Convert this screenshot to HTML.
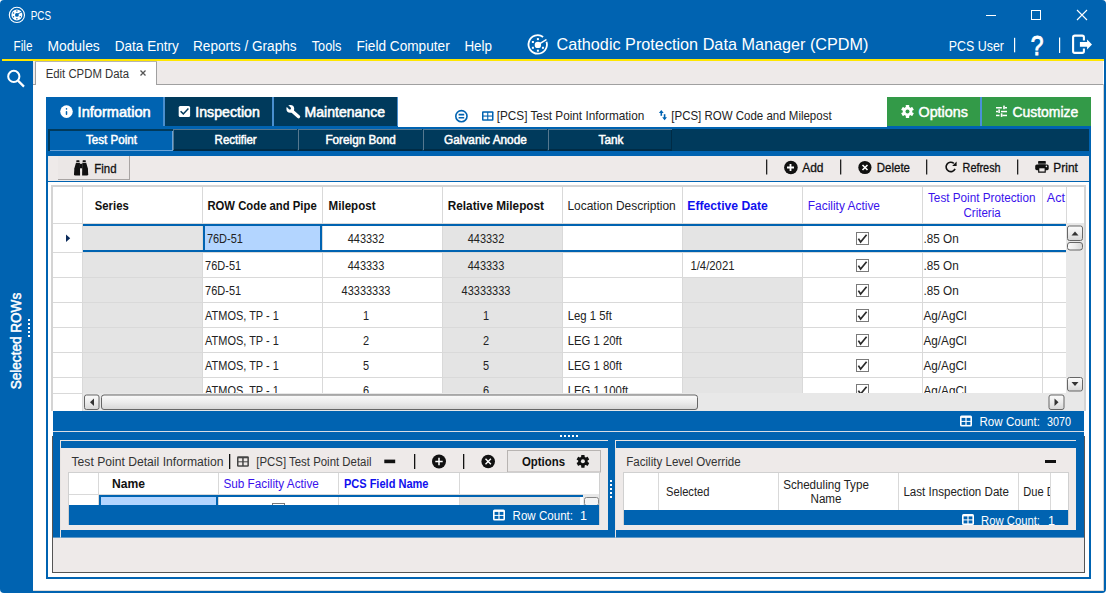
<!DOCTYPE html>
<html><head><meta charset="utf-8"><title>PCS</title>
<style>html,body{margin:0;padding:0;background:#fff;overflow:hidden}svg text{font-family:"Liberation Sans",sans-serif}</style></head>
<body><svg width="1106" height="593" viewBox="0 0 1106 593" font-family="Liberation Sans, sans-serif" style="display:block">
<defs><linearGradient id="sb" x1="0" y1="0" x2="0" y2="1"><stop offset="0" stop-color="#fbfbfb"/><stop offset="0.5" stop-color="#ececec"/><stop offset="1" stop-color="#d6d6d6"/></linearGradient><linearGradient id="sbh" x1="0" y1="0" x2="1" y2="0"><stop offset="0" stop-color="#fbfbfb"/><stop offset="0.5" stop-color="#ececec"/><stop offset="1" stop-color="#d6d6d6"/></linearGradient></defs>
<rect x="0" y="0" width="1106" height="593" fill="#ffffff" />
<rect x="0" y="0" width="1106" height="59" fill="#0063b1" />
<rect x="0" y="59" width="33" height="534" fill="#0063b1" />
<rect x="2" y="59" width="1102" height="2" fill="#ffe600" />
<rect x="1104" y="59" width="2" height="534" fill="#0063b1" />
<rect x="33" y="591" width="1073" height="2" fill="#0063b1" />
<rect x="1103" y="84" width="1" height="507" fill="#d0d0d0" />
<rect x="33" y="590" width="1070" height="1" fill="#e0dcd8" />
<path d="M0,0 L4,0 Q0,0 0,4 Z" fill="#fff"/><path d="M1106,0 L1102,0 Q1106,0 1106,4 Z" fill="#fff"/><path d="M0,593 L4,593 Q0,593 0,589 Z" fill="#fff"/><path d="M1106,593 L1102,593 Q1106,593 1106,589 Z" fill="#fff"/>
<g transform="translate(16.9,14.9)"><circle r="7.6" fill="none" stroke="#fff" stroke-width="1.1"/><circle r="5.5" fill="#fff"/><circle r="1.9" fill="#0063b1"/><circle cx="0.00" cy="3.90" r="0.75" fill="#0063b1"/><circle cx="-3.38" cy="1.95" r="0.75" fill="#0063b1"/><circle cx="-3.38" cy="-1.95" r="0.75" fill="#0063b1"/><circle cx="-0.00" cy="-3.90" r="0.75" fill="#0063b1"/><circle cx="3.38" cy="1.95" r="0.75" fill="#0063b1"/><path d="M1,-1 L6,-3.5" stroke="#0063b1" stroke-width="0.9"/></g>
<text x="30.7" y="20.3" font-size="13.5" fill="#ffffff" textLength="20.3" lengthAdjust="spacingAndGlyphs" text-anchor="start" >PCS</text>
<rect x="986" y="15" width="10" height="1" fill="#fff" />
<rect x="1031.5" y="10.5" width="9" height="9" fill="none" stroke="#fff" stroke-width="1"/>
<path d="M1077,10 L1087,20 M1087,10 L1077,20" stroke="#fff" stroke-width="1.1"/>
<text x="13.6" y="50.7" font-size="14" fill="#ffffff" textLength="18.9" lengthAdjust="spacingAndGlyphs" text-anchor="start" >File</text>
<text x="47.4" y="50.7" font-size="14" fill="#ffffff" textLength="52.4" lengthAdjust="spacingAndGlyphs" text-anchor="start" >Modules</text>
<text x="114.8" y="50.7" font-size="14" fill="#ffffff" textLength="63.9" lengthAdjust="spacingAndGlyphs" text-anchor="start" >Data Entry</text>
<text x="193" y="50.7" font-size="14" fill="#ffffff" textLength="103.6" lengthAdjust="spacingAndGlyphs" text-anchor="start" >Reports / Graphs</text>
<text x="311.7" y="50.7" font-size="14" fill="#ffffff" textLength="29.8" lengthAdjust="spacingAndGlyphs" text-anchor="start" >Tools</text>
<text x="356.5" y="50.7" font-size="14" fill="#ffffff" textLength="93.2" lengthAdjust="spacingAndGlyphs" text-anchor="start" >Field Computer</text>
<text x="464.4" y="50.7" font-size="14" fill="#ffffff" textLength="27.6" lengthAdjust="spacingAndGlyphs" text-anchor="start" >Help</text>
<g transform="translate(537.9,44.9)"><path d="M5.2,-7.9 A9.2,9.2 0 1 0 8.6,-3.2" fill="none" stroke="#fff" stroke-width="1.8"/><circle r="3.2" fill="#fff"/><rect x="-1.00" y="-6.80" width="2" height="2" fill="#fff"/><rect x="-6.02" y="-3.90" width="2" height="2" fill="#fff"/><rect x="-6.02" y="1.90" width="2" height="2" fill="#fff"/><rect x="-1.00" y="4.80" width="2" height="2" fill="#fff"/><rect x="4.02" y="1.90" width="2" height="2" fill="#fff"/><path d="M1.5,-1 L8,-5" stroke="#fff" stroke-width="1.6" stroke-linecap="round"/></g>
<text x="556.6" y="50.4" font-size="16.2" fill="#ffffff" textLength="311.9" lengthAdjust="spacingAndGlyphs" text-anchor="start" >Cathodic Protection Data Manager (CPDM)</text>
<text x="948.8" y="51.2" font-size="14" fill="#ffffff" textLength="55.2" lengthAdjust="spacingAndGlyphs" text-anchor="start" >PCS User</text>
<rect x="1014" y="37.8" width="1.2000000000000455" height="14.5" fill="#ffffff" />
<rect x="1059" y="37.5" width="1.2000000000000455" height="15.5" fill="#ffffff" />
<text x="1030.8" y="54.7" font-size="27.5" fill="#ffffff" textLength="12.7" lengthAdjust="spacingAndGlyphs" text-anchor="start" stroke="#fff" stroke-width="0.9">?</text>
<path d="M1083.9,40.6 L1083.9,37.3 Q1083.9,35.6 1082.2,35.6 L1074.8,35.6 Q1073.1,35.6 1073.1,37.3 L1073.1,51.2 Q1073.1,52.9 1074.8,52.9 L1082.2,52.9 Q1083.9,52.9 1083.9,51.2 L1083.9,48.5" fill="none" stroke="#fff" stroke-width="2.1"/>
<path d="M1079.9,42.1 L1087.1,42.1 L1087.1,39.4 L1092,44.4 L1087.1,49.5 L1087.1,46.7 L1079.9,46.7 Z" fill="#fff"/>
<g fill="none" stroke="#fff" stroke-width="2"><circle cx="13.8" cy="76.4" r="5.6"/><path d="M18,80.6 L24,86.6" stroke-width="2.2"/></g>
<text x="0" y="0" font-size="14" fill="#ffffff" textLength="96.5" lengthAdjust="spacingAndGlyphs" text-anchor="start" transform="translate(21.3,389.3) rotate(-90)" stroke="#fff" stroke-width="0.5">Selected ROWs</text>
<rect x="28" y="319" width="2" height="2" fill="#ffffff" />
<rect x="28" y="323" width="2" height="2" fill="#ffffff" />
<rect x="28" y="327" width="2" height="2" fill="#ffffff" />
<rect x="28" y="331" width="2" height="2" fill="#ffffff" />
<rect x="28" y="335" width="2" height="2" fill="#ffffff" />
<rect x="33" y="61" width="1070" height="23" fill="#eeeae9" />
<rect x="33" y="84" width="1070" height="1" fill="#a0a0a0" />
<rect x="35" y="61" width="1" height="24" fill="#a0a0a0" />
<rect x="36" y="61" width="120" height="25" fill="#ffffff" />
<rect x="156" y="61" width="1" height="24" fill="#a0a0a0" />
<rect x="35" y="61" width="122" height="1" fill="#b4b4b4" />
<text x="45.7" y="78" font-size="12.5" fill="#333333" textLength="83.3" lengthAdjust="spacingAndGlyphs" text-anchor="start" >Edit CPDM Data</text>
<path d="M140.5,70.5 L145.5,75.5 M145.5,70.5 L140.5,75.5" stroke="#555" stroke-width="1.3"/>
<rect x="46" y="97" width="117" height="29" fill="#0063b1" />
<rect x="163" y="97" width="2" height="29" fill="#4a8fcf" />
<rect x="165" y="97" width="107" height="29" fill="#003a5c" />
<rect x="272" y="97" width="2" height="29" fill="#4a8fcf" />
<rect x="274" y="97" width="123" height="29" fill="#003a5c" />
<rect x="887" y="97" width="93" height="29" fill="#339a48" />
<rect x="980" y="97" width="2" height="29" fill="#4a90d9" />
<rect x="982" y="97" width="109" height="29" fill="#339a48" />
<rect x="46" y="126" width="352" height="3" fill="#0063b1" />
<rect x="398" y="127" width="489" height="2" fill="#0063b1" />
<rect x="887" y="126" width="204" height="3" fill="#0063b1" />
<rect x="397" y="97" width="1" height="29" fill="#4a8fcf" />
<rect x="46" y="129" width="2" height="450" fill="#0063b1" />
<rect x="1089" y="129" width="2" height="450" fill="#0063b1" />
<rect x="46" y="577" width="1045" height="2" fill="#0063b1" />
<circle cx="66.5" cy="111.6" r="6.3" fill="#fff"/>
<rect x="65.75" y="111" width="1.5" height="3.9" rx="0.7" fill="#0063b1"/><rect x="65.75" y="108" width="1.5" height="1.8" rx="0.7" fill="#0063b1"/>
<text x="77.6" y="116.9" font-size="13.8" fill="#ffffff" textLength="73.1" lengthAdjust="spacingAndGlyphs" text-anchor="start" stroke="#fff" stroke-width="0.55">Information</text>
<rect x="178.7" y="105.9" width="11.4" height="11.2" rx="1.5" fill="#fff"/><path d="M180.6,111.3 L183.3,113.9 L188.4,108.6" fill="none" stroke="#003a5c" stroke-width="1.5"/>
<text x="195.3" y="116.9" font-size="13.8" fill="#ffffff" textLength="64.5" lengthAdjust="spacingAndGlyphs" text-anchor="start" stroke="#fff" stroke-width="0.55">Inspection</text>
<path d="M291.5,110.5 L298.6,116.8" stroke="#fff" stroke-width="3.2" stroke-linecap="round"/><circle cx="290.3" cy="108.8" r="3.9" fill="#fff"/><path d="M289.8,108.3 L286,104.5" stroke="#003a5c" stroke-width="2.4" stroke-linecap="round"/>
<text x="304.6" y="116.9" font-size="13.8" fill="#ffffff" textLength="80.4" lengthAdjust="spacingAndGlyphs" text-anchor="start" stroke="#fff" stroke-width="0.55">Maintenance</text>
<g fill="none" stroke="#0063b1" stroke-width="1.6"><circle cx="461.4" cy="116.2" r="5.6"/><path d="M458.6,114.6 L464.2,114.6 M458.6,117.8 L464.2,117.8"/></g>
<g><rect x="482" y="111.3" width="11.5" height="9.5" rx="1" fill="#0063b1"/><rect x="483.5" y="112.8" width="3.7" height="2.7" fill="#fff"/><rect x="488.3" y="112.8" width="3.7" height="2.7" fill="#fff"/><rect x="483.5" y="116.6" width="3.7" height="2.7" fill="#fff"/><rect x="488.3" y="116.6" width="3.7" height="2.7" fill="#fff"/></g>
<text x="496.7" y="120" font-size="11.9" fill="#222222" textLength="147.6" lengthAdjust="spacingAndGlyphs" text-anchor="start" >[PCS] Test Point Information</text>
<g fill="#0063b1"><rect x="660.5" y="111.5" width="1.6" height="4.3"/><path d="M658.9,113 L661.3,109.9 L663.7,113 Z"/><rect x="663.8" y="114.2" width="1.6" height="4.3"/><path d="M662.2,117.2 L664.6,120.2 L667,117.2 Z"/></g>
<text x="671.3" y="120" font-size="11.9" fill="#222222" textLength="160.3" lengthAdjust="spacingAndGlyphs" text-anchor="start" >[PCS] ROW Code and Milepost</text>
<g transform="translate(907.5,111.5) scale(1.0)"><circle r="4.7" fill="#ffffff"/><rect x="-1.7" y="-6.4" width="3.4" height="3.5" rx="0.4" fill="#ffffff" transform="rotate(0)"/><rect x="-1.7" y="-6.4" width="3.4" height="3.5" rx="0.4" fill="#ffffff" transform="rotate(60)"/><rect x="-1.7" y="-6.4" width="3.4" height="3.5" rx="0.4" fill="#ffffff" transform="rotate(120)"/><rect x="-1.7" y="-6.4" width="3.4" height="3.5" rx="0.4" fill="#ffffff" transform="rotate(180)"/><rect x="-1.7" y="-6.4" width="3.4" height="3.5" rx="0.4" fill="#ffffff" transform="rotate(240)"/><rect x="-1.7" y="-6.4" width="3.4" height="3.5" rx="0.4" fill="#ffffff" transform="rotate(300)"/><circle r="2" fill="#339a48"/></g>
<text x="918.5" y="116.8" font-size="13.8" fill="#ffffff" textLength="49.4" lengthAdjust="spacingAndGlyphs" text-anchor="start" stroke="#fff" stroke-width="0.45">Options</text>
<g fill="#fff"><rect x="996" y="107" width="5.8" height="1.5"/><rect x="1003.2" y="105.6" width="1.6" height="3.6"/><rect x="1004.8" y="107" width="2.2" height="1.5"/><rect x="996" y="110.8" width="2" height="1.5"/><rect x="998.3" y="109.4" width="1.6" height="3.6"/><rect x="1001" y="110.8" width="6" height="1.5"/><rect x="996" y="114.7" width="3.5" height="1.5"/><rect x="1000.8" y="113.3" width="1.6" height="3.6"/><rect x="1002.4" y="114.7" width="4.6" height="1.5"/></g>
<text x="1012.4" y="116.8" font-size="13.8" fill="#ffffff" textLength="65.8" lengthAdjust="spacingAndGlyphs" text-anchor="start" stroke="#fff" stroke-width="0.45">Customize</text>
<rect x="48" y="129" width="1041" height="22" fill="#003a5c" />
<rect x="48" y="151" width="1041" height="5" fill="#0063b1" />
<rect x="50" y="131" width="122" height="19" fill="#0063b1" />
<rect x="50" y="150" width="122" height="1" fill="#6aa3d6" />
<rect x="172" y="131" width="1" height="20" fill="#6aa3d6" />
<rect x="173" y="129" width="124" height="1" fill="#56788f" />
<rect x="173" y="129" width="1" height="21" fill="#56788f" />
<rect x="174" y="149" width="123" height="2" fill="#002b45" />
<rect x="298" y="129" width="124" height="1" fill="#56788f" />
<rect x="298" y="129" width="1" height="21" fill="#56788f" />
<rect x="299" y="149" width="123" height="2" fill="#002b45" />
<rect x="423" y="129" width="124" height="1" fill="#56788f" />
<rect x="423" y="129" width="1" height="21" fill="#56788f" />
<rect x="424" y="149" width="123" height="2" fill="#002b45" />
<rect x="548" y="129" width="124" height="1" fill="#56788f" />
<rect x="548" y="129" width="1" height="21" fill="#56788f" />
<rect x="549" y="149" width="123" height="2" fill="#002b45" />
<rect x="671" y="130" width="1" height="21" fill="#002b45" />
<text x="86" y="144" font-size="12.3" fill="#ffffff" textLength="51.0" lengthAdjust="spacingAndGlyphs" text-anchor="start" stroke="#fff" stroke-width="0.5">Test Point</text>
<text x="214.6" y="144" font-size="12.3" fill="#ffffff" textLength="42.1" lengthAdjust="spacingAndGlyphs" text-anchor="start" stroke="#fff" stroke-width="0.5">Rectifier</text>
<text x="325.4" y="144" font-size="12.3" fill="#ffffff" textLength="70.5" lengthAdjust="spacingAndGlyphs" text-anchor="start" stroke="#fff" stroke-width="0.5">Foreign Bond</text>
<text x="444.1" y="144" font-size="12.3" fill="#ffffff" textLength="82.7" lengthAdjust="spacingAndGlyphs" text-anchor="start" stroke="#fff" stroke-width="0.5">Galvanic Anode</text>
<text x="598.6" y="144" font-size="12.3" fill="#ffffff" textLength="24.9" lengthAdjust="spacingAndGlyphs" text-anchor="start" stroke="#fff" stroke-width="0.5">Tank</text>
<rect x="48" y="156" width="1041" height="25" fill="#eeeae9" />
<rect x="48" y="181" width="1041" height="1" fill="#0063b1" />
<rect x="58" y="156" width="72" height="24" fill="#ebe7e6" />
<rect x="58" y="179" width="72" height="1" fill="#a8a4a3" />
<rect x="129" y="156" width="1" height="24" fill="#a8a4a3" />
<g fill="#111"><rect x="76.3" y="160.2" width="3.2" height="1.9" rx="0.5"/><rect x="82.6" y="160.2" width="3.2" height="1.9" rx="0.5"/><path d="M76,162.8 L79.9,162.8 L80.1,175.6 L75.3,175.6 Q74,175.6 74,174.2 L74.3,168.5 Z"/><path d="M82.3,162.8 L86.2,162.8 L87.9,168.5 L88.2,174.2 Q88.2,175.6 86.9,175.6 L82.1,175.6 Z"/><rect x="79.8" y="163.8" width="2.6" height="4.5"/></g>
<text x="94.3" y="172.6" font-size="13" fill="#111111" textLength="22.2" lengthAdjust="spacingAndGlyphs" text-anchor="start" stroke="#111" stroke-width="0.3">Find</text>
<rect x="766" y="159.5" width="1.2999999999999545" height="15.0" fill="#222" />
<rect x="840" y="159.5" width="1.2999999999999545" height="15.0" fill="#222" />
<rect x="926" y="159.5" width="1.2999999999999545" height="15.0" fill="#222" />
<rect x="1017" y="159.5" width="1.2999999999999545" height="15.0" fill="#222" />
<circle cx="790.9" cy="167.5" r="6.8" fill="#111"/><path d="M787,167.5 L794,167.5 M790.5,164 L790.5,171" stroke="#fff" stroke-width="1.8"/>
<text x="802.2" y="172" font-size="13" fill="#111111" textLength="21.3" lengthAdjust="spacingAndGlyphs" text-anchor="start" stroke="#111" stroke-width="0.3">Add</text>
<circle cx="864.9" cy="167.5" r="6.6" fill="#111"/><path d="M862.5,165 L867.5,170 M867.5,165 L862.5,170" stroke="#fff" stroke-width="1.6"/>
<text x="876.8" y="172" font-size="13" fill="#111111" textLength="33.2" lengthAdjust="spacingAndGlyphs" text-anchor="start" stroke="#111" stroke-width="0.3">Delete</text>
<path d="M953.8,163.3 A4.7,4.7 0 1 0 955.1,168.9" fill="none" stroke="#111" stroke-width="1.6"/><path d="M956.6,161.6 L956.6,166 L952.2,166 Z" fill="#111"/>
<text x="962.6" y="172" font-size="13" fill="#111111" textLength="38.0" lengthAdjust="spacingAndGlyphs" text-anchor="start" stroke="#111" stroke-width="0.3">Refresh</text>
<g fill="#111"><rect x="1038.1" y="161" width="7.7" height="2.8" rx="0.4"/><rect x="1038.4" y="163.8" width="7.1" height="1" fill="#555"/><rect x="1035.2" y="164.4" width="13.5" height="5.8" rx="1.6"/><rect x="1038.1" y="167.2" width="7.7" height="5.6" rx="0.4"/></g><rect x="1039.3" y="168.3" width="5.3" height="3.2" fill="#eeeae9"/><circle cx="1046.4" cy="166.4" r="0.8" fill="#eee"/>
<text x="1053.3" y="172" font-size="13" fill="#111111" textLength="24.6" lengthAdjust="spacingAndGlyphs" text-anchor="start" stroke="#111" stroke-width="0.3">Print</text>
<rect x="51" y="185" width="1035" height="226" fill="#d4d4d4" />
<rect x="53" y="187" width="1031" height="224" fill="#ffffff" />
<rect x="53" y="223" width="1013" height="1" fill="#d9d9d9" />
<rect x="83" y="224" width="119" height="28" fill="#e4e4e4" />
<rect x="443" y="224" width="119" height="28" fill="#e4e4e4" />
<rect x="683" y="224" width="119" height="28" fill="#e4e4e4" />
<rect x="83" y="252" width="119" height="25" fill="#e4e4e4" />
<rect x="443" y="252" width="119" height="25" fill="#e4e4e4" />
<rect x="83" y="277" width="119" height="25" fill="#e4e4e4" />
<rect x="443" y="277" width="119" height="25" fill="#e4e4e4" />
<rect x="683" y="277" width="119" height="25" fill="#e4e4e4" />
<rect x="83" y="302" width="119" height="25" fill="#e4e4e4" />
<rect x="443" y="302" width="119" height="25" fill="#e4e4e4" />
<rect x="683" y="302" width="119" height="25" fill="#e4e4e4" />
<rect x="83" y="327" width="119" height="25" fill="#e4e4e4" />
<rect x="443" y="327" width="119" height="25" fill="#e4e4e4" />
<rect x="683" y="327" width="119" height="25" fill="#e4e4e4" />
<rect x="83" y="352" width="119" height="25" fill="#e4e4e4" />
<rect x="443" y="352" width="119" height="25" fill="#e4e4e4" />
<rect x="683" y="352" width="119" height="25" fill="#e4e4e4" />
<rect x="83" y="377" width="119" height="25" fill="#e4e4e4" />
<rect x="443" y="377" width="119" height="25" fill="#e4e4e4" />
<rect x="683" y="377" width="119" height="25" fill="#e4e4e4" />
<rect x="53" y="252" width="1013" height="1" fill="#d9d9d9" />
<rect x="53" y="277" width="1013" height="1" fill="#d9d9d9" />
<rect x="53" y="302" width="1013" height="1" fill="#d9d9d9" />
<rect x="53" y="327" width="1013" height="1" fill="#d9d9d9" />
<rect x="53" y="352" width="1013" height="1" fill="#d9d9d9" />
<rect x="53" y="377" width="1013" height="1" fill="#d9d9d9" />
<rect x="82" y="187" width="1" height="206" fill="#d9d9d9" />
<rect x="202" y="187" width="1" height="206" fill="#d9d9d9" />
<rect x="322" y="187" width="1" height="206" fill="#d9d9d9" />
<rect x="442" y="187" width="1" height="206" fill="#d9d9d9" />
<rect x="562" y="187" width="1" height="206" fill="#d9d9d9" />
<rect x="682" y="187" width="1" height="206" fill="#d9d9d9" />
<rect x="802" y="187" width="1" height="206" fill="#d9d9d9" />
<rect x="922" y="187" width="1" height="206" fill="#d9d9d9" />
<rect x="1042" y="187" width="1" height="206" fill="#d9d9d9" />
<rect x="1066" y="187" width="1" height="206" fill="#d9d9d9" />
<rect x="203" y="226" width="119" height="24" fill="#b3d5ff" />
<rect x="83" y="224" width="983" height="2" fill="#0063b1" />
<rect x="83" y="250" width="983" height="2" fill="#0063b1" />
<rect x="203" y="224" width="2" height="28" fill="#0063b1" />
<rect x="320" y="224" width="2" height="28" fill="#0063b1" />
<path d="M66,234.5 L70.2,238.2 L66,242 Z" fill="#0a2a5a"/>
<text x="94.8" y="210" font-size="12.5" fill="#111" font-weight="bold" textLength="33.9" lengthAdjust="spacingAndGlyphs" text-anchor="start" >Series</text>
<text x="207.4" y="210" font-size="12.5" fill="#111" font-weight="bold" textLength="109.3" lengthAdjust="spacingAndGlyphs" text-anchor="start" >ROW Code and Pipe</text>
<text x="328.6" y="210" font-size="12.5" fill="#111" font-weight="bold" textLength="46.9" lengthAdjust="spacingAndGlyphs" text-anchor="start" >Milepost</text>
<text x="447.8" y="210" font-size="12.5" fill="#111" font-weight="bold" textLength="96.2" lengthAdjust="spacingAndGlyphs" text-anchor="start" >Relative Milepost</text>
<text x="567.4" y="210" font-size="12.5" fill="#222" textLength="108.3" lengthAdjust="spacingAndGlyphs" text-anchor="start" >Location Description</text>
<text x="687.3" y="210" font-size="12.5" fill="#1010ee" font-weight="bold" textLength="80.6" lengthAdjust="spacingAndGlyphs" text-anchor="start" >Effective Date</text>
<text x="807.8" y="210" font-size="12.5" fill="#3a12ec" textLength="72.2" lengthAdjust="spacingAndGlyphs" text-anchor="start" >Facility Active</text>
<text x="928" y="202" font-size="12.5" fill="#3a12ec" textLength="107.5" lengthAdjust="spacingAndGlyphs" text-anchor="start" >Test Point Protection</text>
<text x="963.5" y="217" font-size="12.5" fill="#3a12ec" textLength="37.1" lengthAdjust="spacingAndGlyphs" text-anchor="start" >Criteria</text>
<svg x="1043" y="187" width="23" height="36"><text x="3.8" y="15" font-size="12.5" fill="#3a12ec" font-family="Liberation Sans">Act</text></svg>
<svg x="53" y="224" width="1013" height="169" overflow="hidden"><g transform="translate(-53,-224)">
<text x="206.9" y="243" font-size="12.6" fill="#222222" textLength="36.0" lengthAdjust="spacingAndGlyphs" text-anchor="start" >76D-51</text>
<text x="366" y="243" font-size="12.6" fill="#222222" textLength="36.6" lengthAdjust="spacingAndGlyphs" text-anchor="middle" >443332</text>
<text x="486" y="243" font-size="12.6" fill="#222222" textLength="36.6" lengthAdjust="spacingAndGlyphs" text-anchor="middle" >443332</text>
<rect x="856.5" y="232.5" width="12" height="12" fill="#fff" stroke="#7a7a7a" stroke-width="1"/><path d="M858.4,238.6 L860.6,242 L866.6,234.8" fill="none" stroke="#2a2a2a" stroke-width="1.7"/>
<text x="923.5" y="243" font-size="12.6" fill="#222222" textLength="35.2" lengthAdjust="spacingAndGlyphs" text-anchor="start" >.85 On</text>
<text x="205.1" y="270" font-size="12.6" fill="#222222" textLength="36.0" lengthAdjust="spacingAndGlyphs" text-anchor="start" >76D-51</text>
<text x="366" y="270" font-size="12.6" fill="#222222" textLength="36.6" lengthAdjust="spacingAndGlyphs" text-anchor="middle" >443333</text>
<text x="486" y="270" font-size="12.6" fill="#222222" textLength="36.6" lengthAdjust="spacingAndGlyphs" text-anchor="middle" >443333</text>
<text x="690.4" y="270" font-size="12.6" fill="#222222" textLength="44.1" lengthAdjust="spacingAndGlyphs" text-anchor="start" >1/4/2021</text>
<rect x="856.5" y="259.5" width="12" height="12" fill="#fff" stroke="#7a7a7a" stroke-width="1"/><path d="M858.4,265.6 L860.6,269 L866.6,261.8" fill="none" stroke="#2a2a2a" stroke-width="1.7"/>
<text x="923.5" y="270" font-size="12.6" fill="#222222" textLength="35.2" lengthAdjust="spacingAndGlyphs" text-anchor="start" >.85 On</text>
<text x="205.1" y="295" font-size="12.6" fill="#222222" textLength="36.0" lengthAdjust="spacingAndGlyphs" text-anchor="start" >76D-51</text>
<text x="366" y="295" font-size="12.6" fill="#222222" textLength="48.8" lengthAdjust="spacingAndGlyphs" text-anchor="middle" >43333333</text>
<text x="486" y="295" font-size="12.6" fill="#222222" textLength="48.8" lengthAdjust="spacingAndGlyphs" text-anchor="middle" >43333333</text>
<rect x="856.5" y="284.5" width="12" height="12" fill="#fff" stroke="#7a7a7a" stroke-width="1"/><path d="M858.4,290.6 L860.6,294 L866.6,286.8" fill="none" stroke="#2a2a2a" stroke-width="1.7"/>
<text x="923.5" y="295" font-size="12.6" fill="#222222" textLength="35.2" lengthAdjust="spacingAndGlyphs" text-anchor="start" >.85 On</text>
<text x="205.1" y="320" font-size="12.6" fill="#222222" textLength="73.7" lengthAdjust="spacingAndGlyphs" text-anchor="start" >ATMOS, TP - 1</text>
<text x="366" y="320" font-size="12.6" fill="#222222" textLength="6.1" lengthAdjust="spacingAndGlyphs" text-anchor="middle" >1</text>
<text x="486" y="320" font-size="12.6" fill="#222222" textLength="6.1" lengthAdjust="spacingAndGlyphs" text-anchor="middle" >1</text>
<text x="567.7" y="320" font-size="12.6" fill="#222222" textLength="44.1" lengthAdjust="spacingAndGlyphs" text-anchor="start" >Leg 1 5ft</text>
<rect x="856.5" y="309.5" width="12" height="12" fill="#fff" stroke="#7a7a7a" stroke-width="1"/><path d="M858.4,315.6 L860.6,319 L866.6,311.8" fill="none" stroke="#2a2a2a" stroke-width="1.7"/>
<text x="923.5" y="320" font-size="12.6" fill="#222222" textLength="43.0" lengthAdjust="spacingAndGlyphs" text-anchor="start" >Ag/AgCl</text>
<text x="205.1" y="345" font-size="12.6" fill="#222222" textLength="73.7" lengthAdjust="spacingAndGlyphs" text-anchor="start" >ATMOS, TP - 1</text>
<text x="366" y="345" font-size="12.6" fill="#222222" textLength="6.1" lengthAdjust="spacingAndGlyphs" text-anchor="middle" >2</text>
<text x="486" y="345" font-size="12.6" fill="#222222" textLength="6.1" lengthAdjust="spacingAndGlyphs" text-anchor="middle" >2</text>
<text x="567.7" y="345" font-size="12.6" fill="#222222" textLength="54.2" lengthAdjust="spacingAndGlyphs" text-anchor="start" >LEG 1 20ft</text>
<rect x="856.5" y="334.5" width="12" height="12" fill="#fff" stroke="#7a7a7a" stroke-width="1"/><path d="M858.4,340.6 L860.6,344 L866.6,336.8" fill="none" stroke="#2a2a2a" stroke-width="1.7"/>
<text x="923.5" y="345" font-size="12.6" fill="#222222" textLength="43.0" lengthAdjust="spacingAndGlyphs" text-anchor="start" >Ag/AgCl</text>
<text x="205.1" y="370" font-size="12.6" fill="#222222" textLength="73.7" lengthAdjust="spacingAndGlyphs" text-anchor="start" >ATMOS, TP - 1</text>
<text x="366" y="370" font-size="12.6" fill="#222222" textLength="6.1" lengthAdjust="spacingAndGlyphs" text-anchor="middle" >5</text>
<text x="486" y="370" font-size="12.6" fill="#222222" textLength="6.1" lengthAdjust="spacingAndGlyphs" text-anchor="middle" >5</text>
<text x="567.7" y="370" font-size="12.6" fill="#222222" textLength="54.2" lengthAdjust="spacingAndGlyphs" text-anchor="start" >LEG 1 80ft</text>
<rect x="856.5" y="359.5" width="12" height="12" fill="#fff" stroke="#7a7a7a" stroke-width="1"/><path d="M858.4,365.6 L860.6,369 L866.6,361.8" fill="none" stroke="#2a2a2a" stroke-width="1.7"/>
<text x="923.5" y="370" font-size="12.6" fill="#222222" textLength="43.0" lengthAdjust="spacingAndGlyphs" text-anchor="start" >Ag/AgCl</text>
<text x="205.1" y="395" font-size="12.6" fill="#222222" textLength="73.7" lengthAdjust="spacingAndGlyphs" text-anchor="start" >ATMOS, TP - 1</text>
<text x="366" y="395" font-size="12.6" fill="#222222" textLength="6.1" lengthAdjust="spacingAndGlyphs" text-anchor="middle" >6</text>
<text x="486" y="395" font-size="12.6" fill="#222222" textLength="6.1" lengthAdjust="spacingAndGlyphs" text-anchor="middle" >6</text>
<text x="567.7" y="395" font-size="12.6" fill="#222222" textLength="60.5" lengthAdjust="spacingAndGlyphs" text-anchor="start" >LEG 1 100ft</text>
<rect x="856.5" y="384.5" width="12" height="12" fill="#fff" stroke="#7a7a7a" stroke-width="1"/><path d="M858.4,390.6 L860.6,394 L866.6,386.8" fill="none" stroke="#2a2a2a" stroke-width="1.7"/>
<text x="923.5" y="395" font-size="12.6" fill="#222222" textLength="43.0" lengthAdjust="spacingAndGlyphs" text-anchor="start" >Ag/AgCl</text>
</g></svg>
<rect x="1066" y="223" width="18" height="170" fill="#e8e8e8" />
<rect x="1067.5" y="226" width="15" height="14.5" rx="2" fill="url(#sb)" stroke="#666"/>
<path d="M1071.5,235.5 L1075,231.5 L1078.5,235.5 Z" fill="#333"/>
<rect x="1067.5" y="242.5" width="15" height="7.5" rx="2.5" fill="url(#sbh)" stroke="#666"/>
<rect x="1067.5" y="377.5" width="15" height="13.5" rx="2" fill="url(#sb)" stroke="#666"/>
<path d="M1071.5,382 L1075,386 L1078.5,382 Z" fill="#333"/>
<rect x="53" y="393" width="1031" height="18" fill="#ffffff" />
<rect x="83" y="393" width="1001" height="18" fill="#e8e8e8" />
<rect x="82" y="393" width="1" height="18" fill="#d9d9d9" />
<rect x="53" y="393" width="29" height="1" fill="#d9d9d9" />
<rect x="84.5" y="395" width="14.5" height="14.5" rx="2" fill="url(#sb)" stroke="#666"/>
<path d="M94,398.5 L90,402.2 L94,406 Z" fill="#333"/>
<rect x="101.5" y="395" width="596" height="14.5" rx="2.5" fill="url(#sb)" stroke="#666"/>
<rect x="1049" y="395" width="15" height="14.5" rx="2" fill="url(#sb)" stroke="#666"/>
<path d="M1054.5,398.5 L1058.5,402.2 L1054.5,406 Z" fill="#333"/>
<rect x="53" y="411" width="1031" height="20" fill="#0063b1" />
<g><rect x="960" y="415.5" width="12" height="11" rx="1.5" fill="#fff"/><rect x="961.6" y="417.9" width="3.8" height="3" fill="#0063b1"/><rect x="966.6" y="417.9" width="3.8" height="3" fill="#0063b1"/><rect x="961.6" y="421.9" width="3.8" height="3" fill="#0063b1"/><rect x="966.6" y="421.9" width="3.8" height="3" fill="#0063b1"/></g>
<text x="979.5" y="426" font-size="12.5" fill="#ffffff" textLength="60.5" lengthAdjust="spacingAndGlyphs" text-anchor="start" >Row Count:</text>
<text x="1047" y="426" font-size="12.5" fill="#ffffff" textLength="24.0" lengthAdjust="spacingAndGlyphs" text-anchor="start" >3070</text>
<rect x="52" y="436" width="1033" height="137" fill="#555555" />
<rect x="53" y="431" width="1031" height="141" fill="#0063b1" />
<rect x="53" y="431" width="1031" height="1" fill="#d8dde4" />
<rect x="560" y="435" width="2" height="2" fill="#ffffff" />
<rect x="564" y="435" width="2" height="2" fill="#ffffff" />
<rect x="568" y="435" width="2" height="2" fill="#ffffff" />
<rect x="572" y="435" width="2" height="2" fill="#ffffff" />
<rect x="576" y="435" width="2" height="2" fill="#ffffff" />
<rect x="53" y="537.6" width="1031" height="34.39999999999998" fill="#eeeae9" />
<rect x="60" y="440" width="548" height="1" fill="#e8e4e2" />
<rect x="60" y="440" width="1" height="97.60000000000002" fill="#e8e4e2" />
<rect x="61" y="448" width="547" height="82" fill="#eeeae9" />
<rect x="615" y="440" width="461" height="1" fill="#e8e4e2" />
<rect x="615" y="440" width="1" height="97.60000000000002" fill="#e8e4e2" />
<rect x="616" y="448" width="460" height="82" fill="#eeeae9" />
<rect x="610" y="480" width="2" height="2" fill="#ffffff" />
<rect x="610" y="484" width="2" height="2" fill="#ffffff" />
<rect x="610" y="488" width="2" height="2" fill="#ffffff" />
<rect x="610" y="492" width="2" height="2" fill="#ffffff" />
<rect x="610" y="496" width="2" height="2" fill="#ffffff" />
<text x="71.5" y="466.3" font-size="12.5" fill="#333" textLength="151.9" lengthAdjust="spacingAndGlyphs" text-anchor="start" >Test Point Detail Information</text>
<rect x="229" y="454" width="1.3000000000000114" height="15" fill="#111" />
<g><rect x="237" y="456.2" width="11.9" height="10.5" rx="1.3" fill="#444"/><rect x="238.5" y="458.3" width="3.7" height="3" fill="#eeeae9"/><rect x="243.7" y="458.3" width="3.7" height="3" fill="#eeeae9"/><rect x="238.5" y="462.3" width="3.7" height="3" fill="#eeeae9"/><rect x="243.7" y="462.3" width="3.7" height="3" fill="#eeeae9"/></g>
<text x="256.3" y="466.3" font-size="12.5" fill="#333" textLength="115.2" lengthAdjust="spacingAndGlyphs" text-anchor="start" >[PCS] Test Point Detail</text>
<rect x="384.3" y="459.6" width="10.899999999999977" height="3.599999999999966" fill="#111" />
<rect x="414" y="454" width="1.3000000000000114" height="15" fill="#111" />
<circle cx="439" cy="461.5" r="7" fill="#111"/><path d="M435.3,461.5 L442.7,461.5 M439,457.8 L439,465.2" stroke="#fff" stroke-width="1.5"/>
<rect x="463" y="454" width="1.3000000000000114" height="15" fill="#111" />
<circle cx="488.2" cy="461.5" r="6.8" fill="#111"/><path d="M485.5,458.8 L490.9,464.2 M490.9,458.8 L485.5,464.2" stroke="#fff" stroke-width="1.4"/>
<rect x="507.5" y="450.5" width="93" height="21.5" fill="#ebe8e7" stroke="#b8b4b2"/>
<text x="522" y="466.3" font-size="12.5" fill="#111" font-weight="bold" textLength="43.0" lengthAdjust="spacingAndGlyphs" text-anchor="start" >Options</text>
<g transform="translate(582.9,461.3) scale(1.0)"><circle r="4.7" fill="#111111"/><rect x="-1.7" y="-6.4" width="3.4" height="3.5" rx="0.4" fill="#111111" transform="rotate(0)"/><rect x="-1.7" y="-6.4" width="3.4" height="3.5" rx="0.4" fill="#111111" transform="rotate(60)"/><rect x="-1.7" y="-6.4" width="3.4" height="3.5" rx="0.4" fill="#111111" transform="rotate(120)"/><rect x="-1.7" y="-6.4" width="3.4" height="3.5" rx="0.4" fill="#111111" transform="rotate(180)"/><rect x="-1.7" y="-6.4" width="3.4" height="3.5" rx="0.4" fill="#111111" transform="rotate(240)"/><rect x="-1.7" y="-6.4" width="3.4" height="3.5" rx="0.4" fill="#111111" transform="rotate(300)"/><circle r="2" fill="#ebe8e7"/></g>
<rect x="68" y="472" width="532" height="53" fill="#d0d0d0" />
<rect x="69" y="473" width="530" height="32" fill="#ffffff" />
<rect x="69" y="494" width="530" height="1" fill="#d9d9d9" />
<rect x="98" y="473" width="1" height="32" fill="#d9d9d9" />
<rect x="218" y="473" width="1" height="32" fill="#d9d9d9" />
<rect x="338" y="473" width="1" height="32" fill="#d9d9d9" />
<rect x="459" y="473" width="1" height="32" fill="#d9d9d9" />
<text x="112" y="488" font-size="12.5" fill="#111" font-weight="bold" textLength="33.0" lengthAdjust="spacingAndGlyphs" text-anchor="start" >Name</text>
<text x="223.4" y="488" font-size="12.5" fill="#3a12ec" textLength="95.5" lengthAdjust="spacingAndGlyphs" text-anchor="start" >Sub Facility Active</text>
<text x="343.9" y="488" font-size="12.5" fill="#1010ee" font-weight="bold" textLength="84.6" lengthAdjust="spacingAndGlyphs" text-anchor="start" >PCS Field Name</text>
<rect x="99" y="495" width="484" height="2" fill="#0063b1" />
<rect x="99" y="497" width="119" height="8" fill="#0063b1" />
<rect x="101" y="497" width="115" height="8" fill="#b3d5ff" />
<rect x="460" y="497" width="120" height="8" fill="#e4e4e4" />
<rect x="272" y="503" width="13" height="2" fill="#777" />
<rect x="273" y="504" width="11" height="1" fill="#fff" />
<rect x="583" y="494" width="16" height="11" fill="#e8e8e8" />
<rect x="584.5" y="497.5" width="14" height="8" rx="2" fill="#f4f4f4" stroke="#888"/>
<rect x="69" y="505" width="530" height="20" fill="#0063b1" />
<g><rect x="493" y="509.5" width="12" height="11" rx="1.5" fill="#fff"/><rect x="494.6" y="511.9" width="3.8" height="3" fill="#0063b1"/><rect x="499.6" y="511.9" width="3.8" height="3" fill="#0063b1"/><rect x="494.6" y="515.9" width="3.8" height="3" fill="#0063b1"/><rect x="499.6" y="515.9" width="3.8" height="3" fill="#0063b1"/></g>
<text x="512.6" y="520" font-size="12.5" fill="#ffffff" textLength="60.4" lengthAdjust="spacingAndGlyphs" text-anchor="start" >Row Count:</text>
<text x="580" y="520" font-size="12.5" fill="#ffffff" text-anchor="start" >1</text>
<text x="626.3" y="466.4" font-size="12.5" fill="#333" textLength="114.3" lengthAdjust="spacingAndGlyphs" text-anchor="start" >Facility Level Override</text>
<rect x="1045" y="460" width="11" height="3" fill="#111" />
<rect x="623" y="472" width="446" height="53" fill="#d0d0d0" />
<rect x="624" y="473" width="444" height="37" fill="#ffffff" />
<rect x="658" y="473" width="1" height="37" fill="#d9d9d9" />
<rect x="778" y="473" width="1" height="37" fill="#d9d9d9" />
<rect x="898" y="473" width="1" height="37" fill="#d9d9d9" />
<rect x="1018" y="473" width="1" height="37" fill="#d9d9d9" />
<rect x="1050" y="473" width="1" height="37" fill="#d9d9d9" />
<text x="666" y="495.8" font-size="12.5" fill="#222" textLength="43.5" lengthAdjust="spacingAndGlyphs" text-anchor="start" >Selected</text>
<text x="826" y="488.6" font-size="12.5" fill="#222" textLength="85.7" lengthAdjust="spacingAndGlyphs" text-anchor="middle" >Scheduling Type</text>
<text x="826" y="502.8" font-size="12.5" fill="#222" textLength="31.0" lengthAdjust="spacingAndGlyphs" text-anchor="middle" >Name</text>
<text x="903.4" y="495.8" font-size="12.5" fill="#222" textLength="105.6" lengthAdjust="spacingAndGlyphs" text-anchor="start" >Last Inspection Date</text>
<svg x="1019" y="473" width="31" height="37"><text x="4.3" y="22.8" font-size="12.5" fill="#222" font-family="Liberation Sans" textLength="47" lengthAdjust="spacingAndGlyphs">Due Date</text></svg>
<rect x="624" y="510" width="444" height="15" fill="#0063b1" />
<svg x="624" y="510" width="444" height="15"><g transform="translate(-624,-510)">
<g><rect x="962" y="514" width="12" height="11" rx="1.5" fill="#fff"/><rect x="963.6" y="516.4" width="3.8" height="3" fill="#0063b1"/><rect x="968.6" y="516.4" width="3.8" height="3" fill="#0063b1"/><rect x="963.6" y="520.4" width="3.8" height="3" fill="#0063b1"/><rect x="968.6" y="520.4" width="3.8" height="3" fill="#0063b1"/></g>
<text x="981" y="525" font-size="12.5" fill="#ffffff" textLength="59.0" lengthAdjust="spacingAndGlyphs" text-anchor="start" >Row Count:</text>
<text x="1048" y="525" font-size="12.5" fill="#ffffff" text-anchor="start" >1</text>
</g></svg>
</svg></body></html>
